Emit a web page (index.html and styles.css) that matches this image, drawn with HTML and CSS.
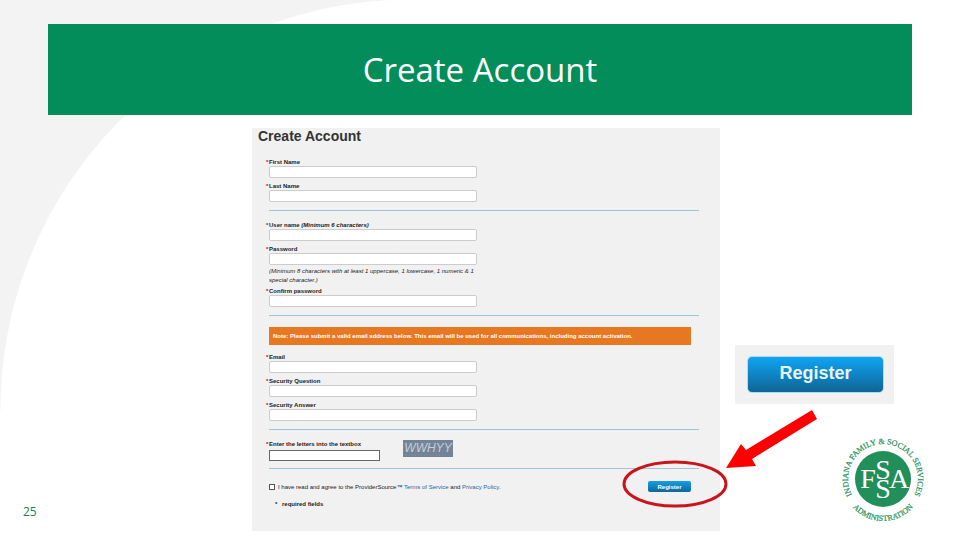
FILE: index.html
```html
<!DOCTYPE html>
<html lang="en">
  <head>
    <meta charset="UTF-8" />
    <meta name="viewport" content="width=device-width, initial-scale=1.0" />
    <title>Create Account</title>
    <link rel="stylesheet" href="styles.css">
  </head>
  <body>
    <div class="slide">
      <header class="banner">
        <h1>Create Account</h1>
      </header>
      <main class="content">
        <div class="left">
          <span class="page-number">25</span>
        </div>
        <form class="panel">
          <h2>Create Account</h2>
          <div class="section">
            <div class="field">
              <label for="first-name">First Name</label>
              <input type="text" id="first-name" />
            </div>
            <div class="field">
              <label for="last-name">Last Name</label>
              <input type="text" id="last-name" />
            </div>
          </div>
          <div class="section">
            <div class="field">
              <label for="username">User name <em>(Minimum 6 characters)</em></label>
              <input type="text" id="username" />
            </div>
            <div class="field">
              <label for="password">Password</label>
              <input type="password" id="password" />
            </div>
            <p class="hint">(Minimum 8 characters with at least 1 uppercase, 1 lowercase, 1 numeric &amp; 1 special character.)</p>
            <div class="field">
              <label for="confirm">Confirm password</label>
              <input type="password" id="confirm" />
            </div>
          </div>
          <div class="section email">
            <p class="note">Note: Please submit a valid email address below. This email will be used for all communications, including account activation.</p>
            <div class="field">
              <label for="email">Email</label>
              <input type="email" id="email" />
            </div>
            <div class="field">
              <label for="question">Security Question</label>
              <input type="text" id="question" />
            </div>
            <div class="field">
              <label for="answer">Security Answer</label>
              <input type="text" id="answer" />
            </div>
          </div>
          <div class="section captcha">
            <div class="field">
              <label for="letters">Enter the letters into the textbox</label>
              <input type="text" id="letters" />
            </div>
            <div class="captcha-image">
              <svg viewBox="0 0 50 17">
                <rect width="50" height="17" fill="#738396" />
                <path d="M0 3h50M0 7h50M0 11h50M0 15h50" stroke="#8592a2" stroke-dasharray="1 2" />
                <text x="25" y="12" text-anchor="middle">WWHYY</text>
              </svg>
            </div>
          </div>
          <div class="terms">
            <input type="checkbox" id="agree" />
            <label for="agree">I have read and agree to the ProviderSource™ <a href="#">Terms of Service</a> and <a href="#">Privacy Policy</a>.</label>
            <div class="submit">
              <button type="submit" class="register">Register</button>
              <svg class="ring" viewBox="0 0 106 48">
                <ellipse cx="53" cy="24" rx="51" ry="22" />
              </svg>
            </div>
          </div>
          <p class="required"><span>*</span> required fields</p>
        </form>
        <aside class="callout">
          <div class="callout-box">
            <button type="button" class="register large">Register</button>
          </div>
          <svg class="arrow" viewBox="0 0 92 60">
            <path d="M0 58 15 34 20 40 86 0 91 9 26 49 30 56Z" fill="#fe0000" />
          </svg>
          <svg class="logo" viewBox="0 0 90 90" role="img" aria-label="Indiana Family &amp; Social Services Administration">
            <defs>
              <path id="arc-top" d="M15 64A35 35 0 1 1 75 64" />
              <path id="arc-bottom" d="M5 48A40 40 0 0 0 85 48" />
            </defs>
            <circle cx="45" cy="46" r="28" fill="#218f59" />
            <text class="logo-ring"><textPath href="#arc-top" startOffset="50%" text-anchor="middle">INDIANA FAMILY &amp; SOCIAL SERVICES</textPath></text>
            <text class="logo-ring"><textPath href="#arc-bottom" startOffset="50%" text-anchor="middle">ADMINISTRATION</textPath></text>
            <g class="logo-letters">
              <text x="30" y="55">F</text>
              <text x="61" y="55">A</text>
              <text x="45" y="46">S</text>
              <text x="45" y="65">S</text>
            </g>
          </svg>
        </aside>
      </main>
    </div>
  </body>
</html>
```

FILE: styles.css
```css
* {
  box-sizing: border-box;
}
body {
  margin: 0;
  font-family: "Liberation Sans", Arial, sans-serif;
  background-color: #fff;
}
.slide {
  min-height: 100vh;
  padding-top: 24px;
  background: radial-gradient(circle at 411px 410px, #fff 410px, #f3f3f3 411px) no-repeat 0 0 / 411px 410px #fff;
}
.banner {
  display: flex;
  justify-content: center;
  align-items: center;
  height: 91px;
  margin: 0 5%;
  background-color: #028d5b;
}
.banner h1 {
  margin: 0;
  font-family: "Open Sans", "Noto Sans", sans-serif;
  font-size: 33px;
  font-weight: normal;
  color: #fff;
}
.content {
  display: grid;
  grid-template-columns: 21fr 39fr 20fr;
  margin-top: 13px;
}
.left {
  display: flex;
  align-items: flex-end;
  padding: 0 0 11px 23px;
}
.page-number {
  font-family: "Open Sans", "Noto Sans", sans-serif;
  font-size: 12px;
  line-height: 16px;
  color: #1a7f56;
}
.panel {
  padding: 0 21px 23px 17px;
  background-color: #f1f1f1;
  font-size: 6px;
  line-height: 8px;
  color: #222;
}
.panel h2 {
  margin: 0 0 14px -11px;
  font-size: 14px;
  line-height: 16px;
  color: #333;
}
.section {
  padding-bottom: 8px;
  margin-bottom: 10px;
  border-bottom: 1px solid #9fc5d6;
}
.field {
  width: 208px;
  margin-bottom: 4px;
}
.field:last-child {
  margin-bottom: 0;
}
.field label {
  position: relative;
  display: block;
  font-weight: bold;
}
.field label::before {
  content: "*";
  position: absolute;
  left: -3px;
  color: #c00;
}
.field input {
  display: block;
  width: 100%;
  height: 12px;
  padding: 0 3px;
  border: 1px solid #ccc;
  border-radius: 2px;
  background-color: #fff;
  font-size: 6px;
}
.hint {
  width: 208px;
  margin: -2px 0 2px;
  line-height: 9px;
  font-style: italic;
}
.email {
  padding-top: 1px;
}
.note {
  margin: 0 8px 8px 0;
  padding: 5px 4px;
  background-color: #e87722;
  font-weight: bold;
  color: #fff;
}
.captcha {
  display: flex;
  gap: 23px;
  padding-bottom: 7px;
  margin-bottom: 12px;
}
.captcha .field {
  width: 111px;
  margin-bottom: 0;
}
.captcha label {
  margin-bottom: 2px;
}
.captcha input {
  height: 11px;
  border: 1px solid #666;
  border-radius: 0;
}
.captcha-image {
  width: 50px;
  height: 17px;
}
.captcha-image svg {
  display: block;
}
.captcha-image text {
  font-size: 12px;
  font-style: italic;
  fill: #c6ced6;
}
.terms {
  display: flex;
  align-items: center;
  gap: 3px;
  margin: 0 8px 8px 0;
}
.terms input {
  appearance: none;
  width: 6px;
  height: 6px;
  margin: 0;
  border: 1px solid #555;
  background-color: #fff;
}
.terms a {
  color: #2a62a5;
  text-decoration: none;
}
.submit {
  position: relative;
  margin-left: auto;
}
.register {
  display: block;
  width: 43px;
  height: 11px;
  padding: 0;
  border: none;
  border-radius: 2px;
  background: linear-gradient(#12a0e8, #0f6699);
  font-family: "Liberation Sans", Arial, sans-serif;
  font-size: 6px;
  line-height: 8px;
  font-weight: bold;
  color: #fff;
}
.ring {
  position: absolute;
  top: -21px;
  left: -26px;
  width: 106px;
  height: 48px;
}
.ring ellipse {
  fill: none;
  stroke: #c8141b;
  stroke-width: 3;
}
.required {
  margin: 0 6px;
  font-weight: bold;
}
.required span {
  margin-right: 3px;
}
.callout {
  display: flex;
  flex-direction: column;
  justify-content: flex-end;
  padding: 0 32px 8px 15px;
}
.callout-box {
  width: 159px;
  padding: 11px 10px 11px 12px;
  background-color: #f1f1f1;
}
.register.large {
  width: 100%;
  height: 37px;
  padding-bottom: 4px;
  border: 1px solid #a9dcf5;
  border-radius: 5px;
  background: linear-gradient(#0fa5f5, #0f6494);
  font-size: 18px;
  line-height: 24px;
  color: #e8f6ff;
}
.arrow {
  width: 92px;
  height: 60px;
  margin: 6px 0 0 -9px;
}
.logo {
  align-self: flex-end;
  width: 90px;
  height: 90px;
  margin-top: -37px;
  overflow: visible;
}
.logo-ring {
  font-family: "Liberation Serif", "Times New Roman", serif;
  font-size: 8px;
  fill: #218f59;
  stroke: #218f59;
  stroke-width: 0.2;
}
.logo-letters {
  font-family: "Liberation Serif", "Times New Roman", serif;
  font-size: 28px;
  text-anchor: middle;
  fill: #fff;
}
```
